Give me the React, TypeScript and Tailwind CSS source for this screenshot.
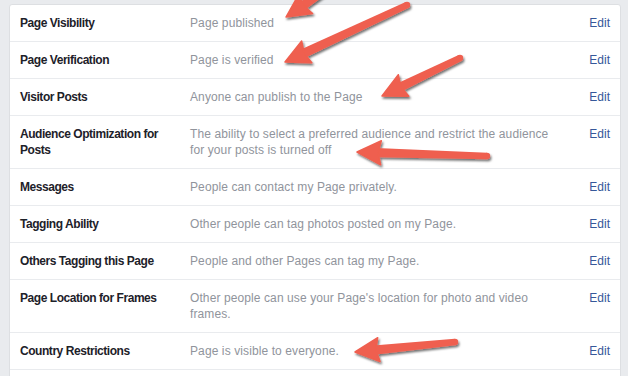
import React from "react";

type Row = { label: string; desc: string };

const rows: Row[] = [
  { label: "Page Visibility", desc: "Page published" },
  { label: "Page Verification", desc: "Page is verified" },
  { label: "Visitor Posts", desc: "Anyone can publish to the Page" },
  {
    label: "Audience Optimization for Posts",
    desc: "The ability to select a preferred audience and restrict the audience for your posts is turned off",
  },
  { label: "Messages", desc: "People can contact my Page privately." },
  { label: "Tagging Ability", desc: "Other people can tag photos posted on my Page." },
  { label: "Others Tagging this Page", desc: "People and other Pages can tag my Page." },
  {
    label: "Page Location for Frames",
    desc: "Other people can use your Page's location for photo and video frames.",
  },
  { label: "Country Restrictions", desc: "Page is visible to everyone." },
];

type Pt = [number, number];

function Arrow({ tail, tip }: { tail: Pt; tip: Pt }) {
  const dx = tip[0] - tail[0];
  const dy = tip[1] - tail[1];
  const len = Math.hypot(dx, dy);
  const u: Pt = [dx / len, dy / len];
  const n: Pt = [-u[1], u[0]];
  const headLen = 21;
  const headW = 24;
  const base: Pt = [tip[0] - u[0] * headLen, tip[1] - u[1] * headLen];
  const wingBack = 3;
  const w1: Pt = [base[0] - u[0] * wingBack + (n[0] * headW) / 2, base[1] - u[1] * wingBack + (n[1] * headW) / 2];
  const w2: Pt = [base[0] - u[0] * wingBack - (n[0] * headW) / 2, base[1] - u[1] * wingBack - (n[1] * headW) / 2];
  const tb = 4.6;
  const tt = 3.2;
  const sb: Pt = [base[0] + u[0] * 2, base[1] + u[1] * 2];
  const shaft = [
    [sb[0] + n[0] * tb, sb[1] + n[1] * tb],
    [tail[0] + n[0] * tt, tail[1] + n[1] * tt],
    [tail[0] - n[0] * tt, tail[1] - n[1] * tt],
    [sb[0] - n[0] * tb, sb[1] - n[1] * tb],
  ]
    .map((p) => p.join(","))
    .join(" ");
  const head = [tip, w1, base, w2].map((p) => p.join(",")).join(" ");
  return (
    <g filter="url(#arrowShadow)">
      <polygon points={shaft} fill="#ef5f4f" />
      <circle cx={tail[0]} cy={tail[1]} r={tt} fill="#ef5f4f" />
      <polygon points={head} fill="#ef5f4f" strokeLinejoin="round" stroke="#ef5f4f" strokeWidth={1.5} />
    </g>
  );
}

export default function App() {
  return (
    <div
      className="relative h-[376px] w-[628px] overflow-hidden bg-[#e9ebee] pt-[4px] pl-[9px] pr-[7px]"
      style={{ fontFamily: '"Liberation Sans", Arial, Helvetica, sans-serif' }}
    >
      <div className="rounded-[3px] border border-[#dddfe2] bg-white">
        {rows.map((r, i) => (
          <div
            key={i}
            className="flex items-start border-b border-[#e9ebee] px-[10px] py-[10px] text-[12px] leading-[16px]"
          >
            <div className="mr-[10px] w-[160px] shrink-0 font-bold tracking-[-0.45px] text-[#1d2129]">
              {r.label}
            </div>
            <div className="w-[376px] shrink-0 tracking-[0.1px] text-[#90949c]">{r.desc}</div>
            <div className="ml-auto text-[#365899]">Edit</div>
          </div>
        ))}
        <div className="h-[36px]" />
      </div>
      <svg
        className="pointer-events-none absolute left-0 top-0"
        width={628}
        height={376}
        viewBox="0 0 628 376"
      >
        <defs>
          <filter id="arrowShadow" x="-20%" y="-20%" width="140%" height="140%">
            <feDropShadow dx="1.2" dy="2" stdDeviation="1.3" floodColor="#000" floodOpacity="0.55" />
          </filter>
        </defs>
        <Arrow tail={[332, -14]} tip={[286, 17]} />
        <Arrow tail={[407, 5]} tip={[285, 62]} />
        <Arrow tail={[460, 58]} tip={[382, 96]} />
        <Arrow tail={[487, 156]} tip={[357, 152]} />
        <Arrow tail={[455, 342]} tip={[355, 352]} />
      </svg>
    </div>
  );
}
